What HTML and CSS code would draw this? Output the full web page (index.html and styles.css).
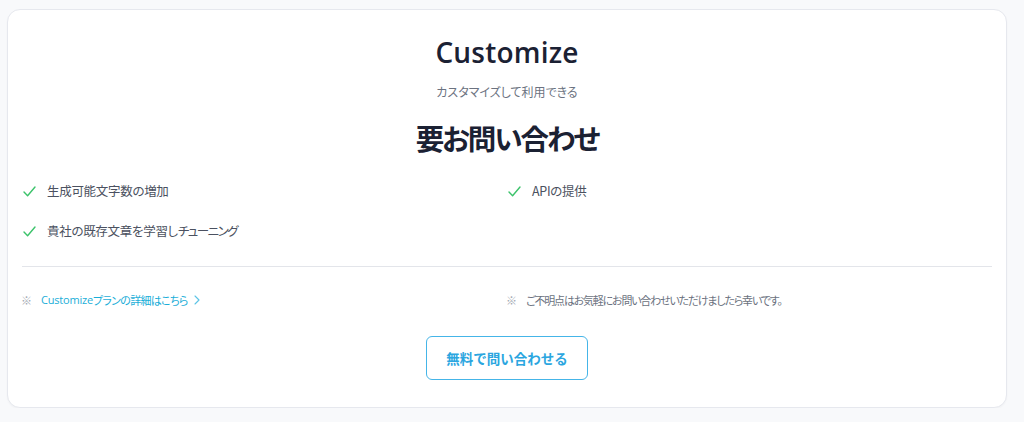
FILE: index.html
```html
<!DOCTYPE html>
<html lang="ja">
<head>
<meta charset="utf-8">
<link rel="stylesheet" href="styles.css">
</head>
<body>
<div class="card">
  <h2 class="title">Customize</h2>
  <p class="subtitle">カスタマイズして利用できる</p>
  <p class="price">要お問い合わせ</p>
  <ul class="features">
    <li><svg class="check" viewBox="0 0 13 11" width="13" height="11"><path d="M1 6 L4.6 9.8 L12 1" fill="none" stroke="#3cc36b" stroke-width="1.4" stroke-linecap="round" stroke-linejoin="round"/></svg><span>生成可能文字数の増加</span></li>
    <li><svg class="check" viewBox="0 0 13 11" width="13" height="11"><path d="M1 6 L4.6 9.8 L12 1" fill="none" stroke="#3cc36b" stroke-width="1.4" stroke-linecap="round" stroke-linejoin="round"/></svg><span>APIの提供</span></li>
    <li><svg class="check" viewBox="0 0 13 11" width="13" height="11"><path d="M1 6 L4.6 9.8 L12 1" fill="none" stroke="#3cc36b" stroke-width="1.4" stroke-linecap="round" stroke-linejoin="round"/></svg><span>貴社の既存文章を学習し<span class="kana">チューニング</span></span></li>
  </ul>
  <hr class="divider">
  <div class="notes">
    <p class="note"><span class="mark">※</span><a class="link" href="#"><span class="latin">Customize</span>プランの詳細はこちら<svg class="chev" viewBox="0 0 6 10" width="6" height="10"><path d="M1 1 L5 5 L1 9" fill="none" stroke="#5cc4e6" stroke-width="1.1" stroke-linecap="round" stroke-linejoin="round"/></svg></a></p>
    <p class="note"><span class="mark">※</span><span class="gray">ご不明点はお気軽にお問い合わせいただけましたら幸いです。</span></p>
  </div>
  <div class="actions">
    <a class="btn" href="#">無料で問い合わせる</a>
  </div>
</div>
</body>
</html>
```
FILE: styles.css
```css
html, body {
  margin: 0;
  background: #f8f9fb;
}
body {
  padding: 9px 17px 0 7px;
  font-family: "Open Sans", "Noto Sans CJK JP", sans-serif;
  color: #1a2030;
}
.card {
  background: #fff;
  border: 1px solid #e6e8ee;
  border-radius: 13px;
  padding: 24px 14px 27px;
  box-shadow: 0 1px 2px rgba(0,0,0,0.03);
}
.title {
  margin: 0;
  text-align: center;
  font-size: 28px;
  line-height: 36px;
  font-weight: 600;
  color: #1b2133;
  letter-spacing: 0.2px;
}
.subtitle {
  margin: 13px 0 0;
  text-align: center;
  font-family: "Noto Sans CJK JP", sans-serif;
  font-feature-settings: "palt";
  font-size: 12px;
  line-height: 18px;
  color: #6b7280;
}
.price {
  margin: 17px 0 0;
  text-align: center;
  font-family: "Noto Sans CJK JP", sans-serif;
  font-feature-settings: "palt";
  font-size: 28.5px;
  line-height: 40px;
  font-weight: 700;
  letter-spacing: -2px;
  color: #1b2133;
}
.features {
  list-style: none;
  margin: 23px 0 0;
  padding: 0;
  display: grid;
  grid-template-columns: 1fr 1fr;
  row-gap: 20px;
}
.features li {
  display: flex;
  align-items: center;
  gap: 11px;
  padding-left: 1px;
  font-family: "Noto Sans CJK JP", sans-serif;
  font-feature-settings: "palt";
  font-size: 12.5px;
  line-height: 20px;
  letter-spacing: -0.3px;
  color: #4b5160;
}
.kana {
  letter-spacing: -1.5px;
}
.check {
  flex: none;
}
.divider {
  margin: 25px 0 0;
  border: 0;
  border-top: 1px solid #e3e5ea;
  height: 0;
}
.notes {
  display: grid;
  grid-template-columns: 1fr 1fr;
  margin-top: 24px;
}
.note {
  margin: 0;
  display: flex;
  align-items: center;
  font-family: "Noto Sans CJK JP", sans-serif;
  font-feature-settings: "palt";
  font-size: 11px;
  line-height: 18px;
  letter-spacing: -0.7px;
}
.mark {
  color: #a3a8b2;
  width: 20px;
  flex: none;
  margin-left: -1px;
  letter-spacing: 0;
}
.link {
  color: #1aaed8;
  text-decoration: none;
  display: inline-flex;
  align-items: center;
}
.latin {
  font-family: "Open Sans", sans-serif;
  letter-spacing: -0.2px;
}
.chev {
  margin-left: 6px;
}
.gray {
  color: #6b7280;
  letter-spacing: -1.2px;
}
.actions {
  display: flex;
  justify-content: center;
  margin-top: 27px;
}
.btn {
  display: flex;
  align-items: center;
  justify-content: center;
  width: 160px;
  height: 42px;
  border: 1px solid #45b5e8;
  border-radius: 6px;
  color: #2ba6e0;
  font-family: "Noto Sans CJK JP", sans-serif;
  font-size: 13.5px;
  font-weight: 700;
  text-decoration: none;
}
```
